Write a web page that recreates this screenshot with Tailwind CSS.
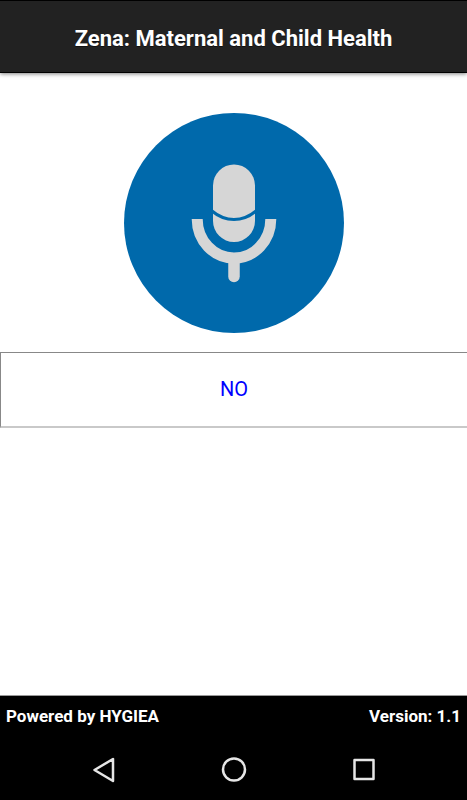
<!DOCTYPE html>
<html lang="en">
<head>
    <meta charset="UTF-8">
    <meta name="viewport" content="width=device-width, initial-scale=1.0">
    <title>Zena: Maternal and Child Health</title>
    <script src="https://cdn.jsdelivr.net/npm/@tailwindcss/browser@4"></script>
</head>
<body class="bg-white min-h-screen flex flex-col font-[Roboto,sans-serif]">
    <!-- Header -->
    <header class="bg-[#222222] border-y border-black shadow-[0_1px_4px_rgba(0,0,0,0.5)] pt-5 pb-4">
        <h1 class="text-[22px] leading-[35px] font-bold text-white text-center [text-shadow:0_1px_0_#111]">Zena: Maternal and Child Health</h1>
    </header>

    <main class="grow flex flex-col items-center pt-10">
        <!-- Speak button -->
        <button type="button" aria-label="Speak" class="block size-[220px] rounded-full">
            <svg viewBox="0 0 220 220" class="block w-full h-full">
                <circle cx="110" cy="110" r="110" fill="#0069ab"/>
                <rect x="89" y="51.5" width="42" height="77.5" rx="21" fill="#d6d6d6"/>
                <path d="M88 98Q98 106.5 110 106.5Q122 106.5 132 98" fill="none" stroke="#0069ab" stroke-width="3"/>
                <path d="M73.2 106A36.7 39 0 0 0 146.8 106" fill="none" stroke="#d6d6d6" stroke-width="11"/>
                <path d="M110 146V163.5" fill="none" stroke="#d6d6d6" stroke-width="11.5" stroke-linecap="round"/>
            </svg>
        </button>

        <!-- Recognised answer -->
        <output class="block w-full mt-[19px] border-t border-l border-[#888888] border-b-2 border-b-[#c9c9c9] py-6 text-xl leading-[25px] text-[#0000ff] text-center">NO</output>
    </main>

    <!-- Footer -->
    <footer class="bg-black text-white border-t border-[#999999]">
        <div class="flex justify-between px-[6px] pt-2 text-[17px] leading-6 font-bold">
            <p>Powered by HYGIEA</p>
            <p>Version: 1.1</p>
        </div>
        <nav class="flex justify-center gap-[98px] pt-[26px] pb-[14px]">
            <button type="button" aria-label="Back" class="size-8">
                <svg viewBox="0 0 32 32" class="block" fill="none" stroke="#e6e6e6" stroke-width="2.5" stroke-linejoin="round">
                    <path d="M6.5 16L25 5V27Z"/>
                </svg>
            </button>
            <button type="button" aria-label="Home" class="size-8">
                <svg viewBox="0 0 32 32" class="block" fill="none" stroke="#e6e6e6" stroke-width="2.5">
                    <circle cx="16" cy="15.5" r="11"/>
                </svg>
            </button>
            <button type="button" aria-label="Recent apps" class="size-8">
                <svg viewBox="0 0 32 32" class="block" fill="none" stroke="#e6e6e6" stroke-width="2.5" stroke-linejoin="round">
                    <rect x="6.5" y="6" width="19" height="19"/>
                </svg>
            </button>
        </nav>
    </footer>
</body>
</html>
